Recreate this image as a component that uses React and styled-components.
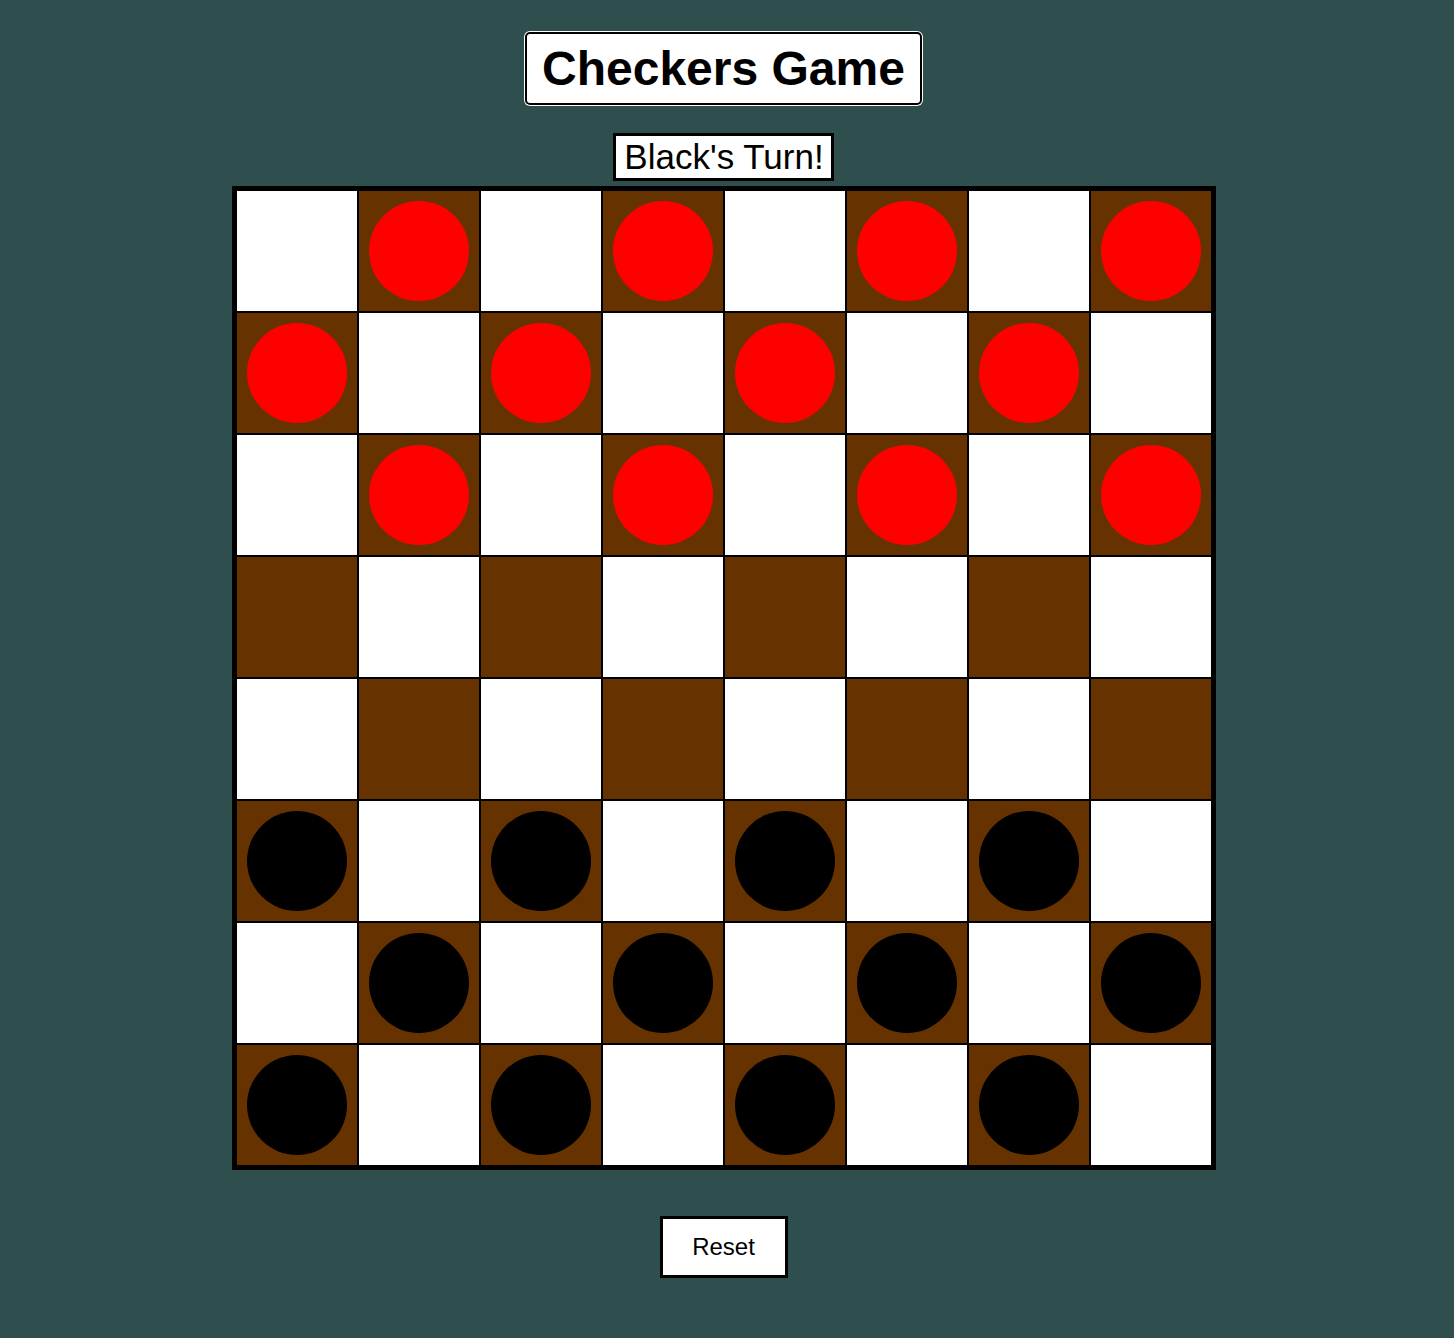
import React, { useState } from 'react';
import styled, { createGlobalStyle } from 'styled-components';

const GlobalStyle = createGlobalStyle`
  body {
    margin: 0;
    background-color: #2f4f4f;
    font-family: "Liberation Sans", Arial, sans-serif;
  }
`;

const Page = styled.div`
  display: flex;
  flex-direction: column;
  align-items: center;
  padding: 32px 7px 60px 0;
`;

const Title = styled.h1`
  margin: 0;
  padding: 7px 15px;
  font-size: 48px;
  line-height: 55px;
  font-weight: bold;
  color: #000;
  background-color: #fff;
  border: 2px solid #000;
  border-radius: 5px;
  box-shadow: 0 0 0 1px #fff;
`;

const Turn = styled.div`
  margin-top: 28px;
  padding: 0 7px 0 8px;
  font-size: 35px;
  line-height: 42px;
  color: #000;
  background-color: #fff;
  border: 3px solid #000;
`;

const Board = styled.div`
  margin-top: 5px;
  display: grid;
  grid-template-columns: repeat(8, 122px);
  grid-template-rows: repeat(8, 122px);
  border: 4px solid #000;
`;

const Square = styled.div`
  box-sizing: border-box;
  border: 1px solid #000;
  background-color: ${(p) => (p.$dark ? '#663300' : '#fff')};
  display: flex;
  align-items: center;
  justify-content: center;
`;

const Piece = styled.div`
  width: 100px;
  height: 100px;
  border-radius: 50%;
  background-color: ${(p) => (p.$color === 'red' ? '#ff0000' : '#000')};
`;

const ResetButton = styled.button`
  margin-top: 46px;
  box-sizing: border-box;
  width: 128px;
  height: 62px;
  border: 3px solid #000;
  background-color: #fff;
  font-family: "Liberation Sans", Arial, sans-serif;
  font-size: 24px;
  color: #000;
  cursor: pointer;
`;

function startBoard() {
  const rows = [];
  for (let r = 0; r < 8; r++) {
    const row = [];
    for (let c = 0; c < 8; c++) {
      const dark = (r + c) % 2 === 1;
      let piece = null;
      if (dark && r < 3) piece = 'red';
      if (dark && r > 4) piece = 'black';
      row.push(piece);
    }
    rows.push(row);
  }
  return rows;
}

export default function App() {
  const [board, setBoard] = useState(startBoard);
  const [turn, setTurn] = useState('Black');

  function reset() {
    setBoard(startBoard());
    setTurn('Black');
  }

  return (
    <Page>
      <GlobalStyle />
      <Title>Checkers Game</Title>
      <Turn>{turn}'s Turn!</Turn>
      <Board>
        {board.map((row, r) => row.map((piece, c) => (
          <Square key={`${r}-${c}`} $dark={(r + c) % 2 === 1}>
            {piece && <Piece $color={piece} />}
          </Square>
        )))}
      </Board>
      <ResetButton type="button" onClick={reset}>Reset</ResetButton>
    </Page>
  );
}
